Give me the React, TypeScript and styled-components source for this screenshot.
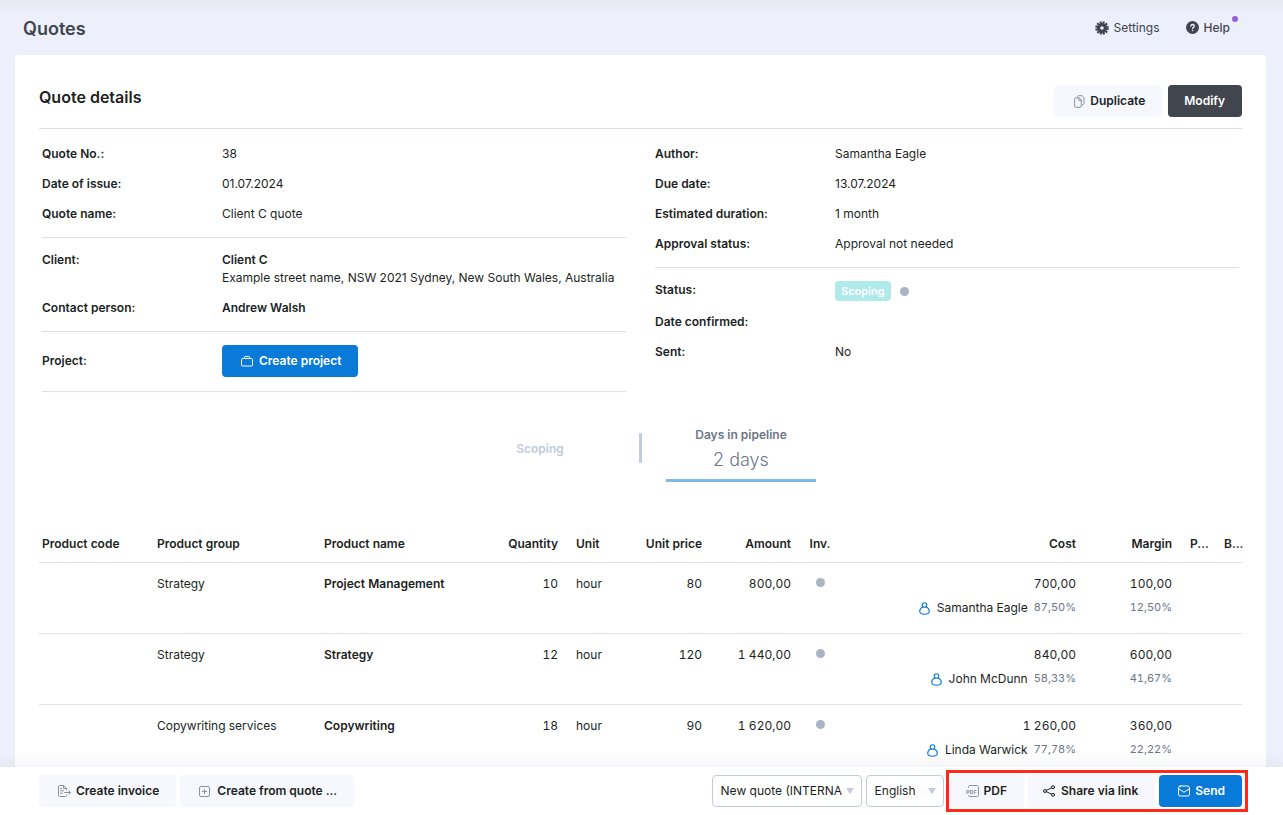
import React from 'react';
import styled, { createGlobalStyle, css } from 'styled-components';

const color = {
  page: '#edf0fa',
  text: '#1c1f24',
  heading: '#40454f',
  muted: '#6b7686',
  faint: '#c3cadb',
  line: '#dcdfea',
  dot: '#a9b4c4',
  soft: '#f6f8fd',
  dark: '#41454e',
  blue: '#0a7ad8',
  red: '#ff291a',
  icon: '#8793a5',
};

const GlobalStyle = createGlobalStyle`
  *, *::before, *::after { box-sizing: border-box; }
  body {
    margin: 0;
    background: ${color.page};
    color: ${color.text};
    font-family: Inter, 'Liberation Sans', sans-serif;
    font-size: 12px;
    line-height: 18px;
  }
`;

const Shell = styled.div`
  display: flex;
  flex-direction: column;
  height: 100vh;
`;

const Scroller = styled.div`
  flex: 1;
  min-height: 0;
  overflow-y: auto;
  scrollbar-width: none;
  background: linear-gradient(#e5e8f0, ${color.page} 14px);
`;

const TopBar = styled.header`
  display: flex;
  align-items: center;
  justify-content: space-between;
  height: 55px;
  padding: 0 53px 0 23px;
`;

const PageTitle = styled.h1`
  margin: 0;
  padding-top: 2px;
  font-size: 18px;
  line-height: 24px;
  font-weight: 600;
  color: ${color.heading};
`;

const TopNav = styled.nav`
  display: flex;
  gap: 26px;
`;

const TopLink = styled.a<{ $strong?: boolean }>`
  position: relative;
  display: flex;
  align-items: center;
  gap: 5px;
  color: ${color.heading};
  text-decoration: none;
  font-weight: ${(p) => (p.$strong ? 500 : 400)};
`;

const NewsDot = styled.span`
  position: absolute;
  top: -3px;
  right: -8px;
  width: 6px;
  height: 6px;
  border-radius: 50%;
  background: #9460d8;
`;

const Panel = styled.main`
  margin: 0 17px 0 15px;
  padding: 30px 24px;
  border-radius: 4px;
  background: #fff;
`;

const PanelHead = styled.div`
  display: flex;
  justify-content: space-between;
  padding-bottom: 11px;
  border-bottom: 1px solid #d8deea;
`;

const PanelTitle = styled.h2`
  margin: 0;
  font-size: 16px;
  line-height: 24px;
  font-weight: 600;
`;

const Actions = styled.div<{ $gap: number }>`
  display: flex;
  gap: ${(p) => p.$gap}px;
`;

type Tone = 'soft' | 'dark' | 'blue';
const tones = {
  soft: css`background: ${color.soft}; color: ${color.text};`,
  dark: css`background: ${color.dark}; color: #fff;`,
  blue: css`background: ${color.blue}; color: #fff;`,
};

const Button = styled.button<{ $tone?: Tone; $lead?: number }>`
  display: inline-flex;
  align-items: center;
  gap: 5px;
  height: 32px;
  padding: 0 17px 0 ${(p) => p.$lead ?? 18}px;
  border: 0;
  border-radius: 4px;
  font: 600 12px/18px Inter, 'Liberation Sans', sans-serif;
  white-space: nowrap;
  cursor: pointer;
  ${(p) => tones[p.$tone ?? 'soft']}
`;

const Details = styled.div`
  display: grid;
  grid-template-columns: 1fr 1fr;
  gap: 29px;
  padding: 3px 3px 0;
`;

const Section = styled.dl<{ $last?: boolean }>`
  margin: 0;
  padding: 7px 0 8px;
  border-bottom: ${(p) => (p.$last ? '0' : `1px solid ${color.line}`)};
`;

const Field = styled.div<{ $center?: boolean }>`
  display: flex;
  align-items: ${(p) => (p.$center ? 'center' : 'flex-start')};
  padding: 6px 0;
`;

const Label = styled.dt`
  flex: 0 0 180px;
  font-weight: 600;
`;

const Value = styled.dd<{ $strong?: boolean }>`
  margin: 0;
  font-weight: ${(p) => (p.$strong ? 600 : 400)};
`;

const StatusValue = styled(Value)`
  display: flex;
  align-items: center;
  gap: 9px;
`;

const ClientName = styled.strong`
  display: block;
  font-weight: 600;
`;

const Badge = styled.span`
  height: 20px;
  padding: 0 6px;
  border-radius: 4px;
  background: #b0eaea;
  color: #fff;
  font-size: 11px;
  line-height: 20px;
  font-weight: 600;
`;

const Dot = styled.span`
  display: inline-block;
  width: 9px;
  height: 9px;
  border-radius: 50%;
  background: ${color.dot};
  vertical-align: 1px;
`;

const Pipeline = styled.div`
  display: flex;
  justify-content: center;
  align-items: center;
  gap: 24px;
  height: 68px;
  margin-top: 22px;
`;

const Stage = styled.div<{ $active?: boolean }>`
  width: 150px;
  padding: ${(p) => (p.$active ? '12px 0 3px' : '2px 0 0')};
  border-bottom: ${(p) => (p.$active ? '3px solid #7fb9ea' : '0')};
  color: ${(p) => (p.$active ? color.muted : color.faint)};
  font-weight: 600;
  text-align: center;
`;

const StageValue = styled.div`
  font-size: 18px;
  line-height: 32px;
  font-weight: 300;
`;

const Separator = styled.span`
  width: 3px;
  height: 30px;
  border-radius: 1px;
  background: ${color.faint};
`;

const Products = styled.table`
  width: 100%;
  margin-top: 44px;
  border-collapse: collapse;
  table-layout: fixed;
`;

const Col = styled.col<{ $w?: number }>`
  width: ${(p) => (p.$w ? `${p.$w}px` : 'auto')};
`;

type Align = 'left' | 'right' | 'center';

const Th = styled.th<{ $align?: Align; $tight?: boolean }>`
  padding: ${(p) => (p.$tight ? '9px 0 9px 3px' : '9px 15px 9px 3px')};
  border-bottom: 1px solid ${color.line};
  font-weight: 600;
  text-align: ${(p) => p.$align ?? 'left'};
  white-space: nowrap;
`;

const Td = styled.td<{ $align?: Align; $strong?: boolean }>`
  height: 71px;
  padding: 12px 15px 0 3px;
  border-bottom: 1px solid #dfe0e4;
  font-weight: ${(p) => (p.$strong ? 600 : 400)};
  font-variant-numeric: tabular-nums;
  text-align: ${(p) => p.$align ?? 'left'};
  vertical-align: top;
  white-space: nowrap;
`;

const SubLine = styled.div`
  display: flex;
  align-items: flex-start;
  justify-content: flex-end;
  gap: 6px;
  padding-top: 6px;
`;

const Person = styled.span`
  display: flex;
  align-items: center;
  gap: 7px;
`;

const Percent = styled.span`
  color: ${color.muted};
  font-size: 11px;
  line-height: 16px;
`;

const Footer = styled.footer`
  display: flex;
  justify-content: space-between;
  padding: 8px 41px 8px 39px;
  background: #fff;
  box-shadow: 0 -2px 14px rgba(30, 40, 80, 0.07);
  z-index: 1;
`;

const SelectBox = styled.span<{ $w: number }>`
  display: grid;
  align-items: center;
  width: ${(p) => p.$w}px;

  & > * { grid-area: 1 / 1; }
  & > svg { justify-self: end; margin-right: 8px; pointer-events: none; }
`;

const Select = styled.select`
  appearance: none;
  width: 100%;
  height: 32px;
  padding: 0 19px 0 8px;
  border: 1px solid ${color.faint};
  border-radius: 4px;
  background: #fff;
  color: ${color.text};
  font: 400 12px/18px Inter, 'Liberation Sans', sans-serif;
`;

const Highlighted = styled(Actions)`
  position: relative;

  &::after {
    content: '';
    position: absolute;
    inset: -5px -6px -5px -2px;
    border: 3px solid ${color.red};
    pointer-events: none;
  }
`;

const Icon = ({ w, h, box, children }: { w: number; h: number; box?: string; children: React.ReactNode }) => (
  <svg width={w} height={h} viewBox={box ?? `0 0 ${w} ${h}`} fill="none" stroke="currentColor" strokeLinecap="round" strokeLinejoin="round" aria-hidden="true">
    {children}
  </svg>
);

const GearIcon = () => (
  <Icon w={14} h={14}>
    <circle cx="7" cy="7" r="3.500" strokeWidth="3.400" />
    <circle cx="7" cy="7" r="5.800" strokeWidth="2" strokeLinecap="butt" strokeDasharray="1.9 1.137" />
  </Icon>
);

const HelpIcon = () => (
  <Icon w={13} h={13}>
    <circle cx="6.5" cy="6.5" r="6.5" fill="currentColor" stroke="none" />
    <path d="M4.8 5.1c.1-1 .8-1.6 1.8-1.6s1.7.6 1.7 1.4c0 1.2-1.7 1.300-1.700 2.500" stroke={color.page} strokeWidth="1.300" />
    <circle cx="6.6" cy="9.5" r=".8" fill={color.page} stroke="none" />
  </Icon>
);

const CopyIcon = () => (
  <Icon w={13} h={13} box="-2 0 13 13">
    <g stroke={color.icon}>
      <path d="M3.200 1.900C3.300 1.100 3.800.7 4.500.7h3.600L10 2.700v5.900c0 .8-.5 1.300-1.300 1.300h-.6" />
      <path d="M5 2.900H1.900C1.100 2.900.6 3.400.6 4.200V11c0 .8.500 1.300 1.300 1.300h4.100c.8 0 1.300-.5 1.300-1.300V5.200z" />
      <path d="M4.800 3.100v2.300h2.300" />
    </g>
  </Icon>
);

const CaseIcon = () => (
  <Icon w={14} h={12} box="-1 0 14 12">
    <rect x=".5" y="3.500" width="11" height="7.500" rx="1" />
    <path d="M3.500 3.300V2.200c0-.5.300-.8.800-.8h3.400c.5 0 .8.300.8.800v1.100" />
  </Icon>
);

const InvoiceIcon = () => (
  <Icon w={14} h={12} box="-1 0 14 12">
    <g stroke={color.icon}>
      <path d="M8.500 10v.5c0 .6-.4 1-1 1h-6c-.6 0-1-.4-1-1v-9c0-.6.400-1 1-1h4.200l2.800 2.700v1.600M5.500.8v2.700h2.800M2.500 3.500h1M2.500 5.800h3M2.500 8.200h2M6.500 7.500h6M10.700 5.700l1.800 1.800-1.800 1.800" />
    </g>
  </Icon>
);

const PlusBoxIcon = () => (
  <Icon w={14} h={11} box="-1 0 14 11">
    <g stroke={color.icon}>
      <rect x=".5" y=".5" width="10" height="10" rx="1.500" />
      <path d="M5.500 3.300v4.400M3.300 5.500h4.400" />
    </g>
  </Icon>
);

const PdfIcon = () => (
  <Icon w={13} h={12}>
    <path stroke={color.icon} d="M2.500 2.500v-1c0-.6.400-1 1-1h7.700l1.300 1.300v8.700c0 .6-.4 1-1 1h-8c-.6 0-1-.4-1-1" />
    <text x="0" y="8.500" fill={color.icon} stroke="none" fontSize="6" fontWeight="700" fontFamily="'Liberation Mono', monospace">PDF</text>
  </Icon>
);

const ShareIcon = () => (
  <Icon w={13} h={12}>
    <circle cx="2" cy="6" r="1.500" />
    <circle cx="10" cy="2.200" r="1.500" />
    <circle cx="10" cy="9.800" r="1.500" />
    <path d="M3.400 5.300l5.200-2.500M3.400 6.700l5.200 2.500" />
  </Icon>
);

const MailIcon = () => (
  <Icon w={13} h={12} box="-1 0 13 12">
    <rect x=".5" y="1" width="11" height="10" rx="1.800" />
    <path d="M1 4l5 3.200L11 4" />
  </Icon>
);

const PersonIcon = () => (
  <Icon w={11} h={13}>
    <g stroke={color.blue} strokeWidth="1.100">
      <circle cx="5.500" cy="3" r="2.300" />
      <path d="M3.900 4.700C1.900 5.700.7 7.500.7 9.300c0 2 1.600 2.900 4.800 2.900s4.800-.9 4.800-2.900c0-1.800-1.200-3.600-3.200-4.600" />
    </g>
  </Icon>
);

const Caret = () => (
  <Icon w={8} h={6}>
    <path d="M0 0h8L4 6z" fill={color.faint} stroke="none" />
  </Icon>
);

const products = [
  { group: 'Strategy', name: 'Project Management', qty: '10', price: '80', amount: '800,00', cost: '700,00', person: 'Samantha Eagle', costPct: '87,50%', margin: '100,00', marginPct: '12,50%' },
  { group: 'Strategy', name: 'Strategy', qty: '12', price: '120', amount: '1 440,00', cost: '840,00', person: 'John McDunn', costPct: '58,33%', margin: '600,00', marginPct: '41,67%' },
  { group: 'Copywriting services', name: 'Copywriting', qty: '18', price: '90', amount: '1 620,00', cost: '1 260,00', person: 'Linda Warwick', costPct: '77,78%', margin: '360,00', marginPct: '22,22%' },
];

const TextField = ({ label, value, strong }: { label: string; value?: string; strong?: boolean }) => (
  <Field>
    <Label>{label}</Label>
    <Value $strong={strong}>{value}</Value>
  </Field>
);

export default function App() {
  return (
    <Shell>
      <GlobalStyle />
      <Scroller>
        <TopBar>
          <PageTitle>Quotes</PageTitle>
          <TopNav>
            <TopLink href="#settings"><GearIcon />Settings</TopLink>
            <TopLink href="#help" $strong><HelpIcon />Help<NewsDot /></TopLink>
          </TopNav>
        </TopBar>
        <Panel>
          <PanelHead>
            <PanelTitle>Quote details</PanelTitle>
            <Actions $gap={6}>
              <Button type="button"><CopyIcon />Duplicate</Button>
              <Button type="button" $tone="dark" $lead={16}>Modify</Button>
            </Actions>
          </PanelHead>

          <Details>
            <div>
              <Section>
                <TextField label="Quote No.:" value="38" />
                <TextField label="Date of issue:" value="01.07.2024" />
                <TextField label="Quote name:" value="Client C quote" />
              </Section>
              <Section>
                <Field>
                  <Label>Client:</Label>
                  <Value>
                    <ClientName>Client C</ClientName>
                    Example street name, NSW 2021 Sydney, New South Wales, Australia
                  </Value>
                </Field>
                <TextField label="Contact person:" value="Andrew Walsh" strong />
              </Section>
              <Section>
                <Field $center>
                  <Label>Project:</Label>
                  <Value><Button type="button" $tone="blue"><CaseIcon />Create project</Button></Value>
                </Field>
              </Section>
            </div>
            <div>
              <Section>
                <TextField label="Author:" value="Samantha Eagle" />
                <TextField label="Due date:" value="13.07.2024" />
                <TextField label="Estimated duration:" value="1 month" />
                <TextField label="Approval status:" value="Approval not needed" />
              </Section>
              <Section $last>
                <Field>
                  <Label>Status:</Label>
                  <StatusValue><Badge>Scoping</Badge><Dot /></StatusValue>
                </Field>
                <TextField label="Date confirmed:" />
                <TextField label="Sent:" value="No" />
              </Section>
            </div>
          </Details>

          <Pipeline>
            <Stage>Scoping</Stage>
            <Separator />
            <Stage $active>
              Days in pipeline
              <StageValue>2 days</StageValue>
            </Stage>
          </Pipeline>

          <Products>
            <colgroup>
              <Col $w={115} /><Col $w={167} /><Col $w={169} /><Col $w={83} /><Col $w={60} /><Col $w={84} />
              <Col $w={89} /><Col $w={40} /><Col /><Col $w={96} /><Col $w={34} /><Col $w={21} />
            </colgroup>
            <thead>
              <tr>
                <Th>Product code</Th>
                <Th>Product group</Th>
                <Th>Product name</Th>
                <Th $align="right">Quantity</Th>
                <Th>Unit</Th>
                <Th $align="right">Unit price</Th>
                <Th $align="right">Amount</Th>
                <Th $align="center">Inv.</Th>
                <Th $align="right">Cost</Th>
                <Th $align="right">Margin</Th>
                <Th $tight>P...</Th>
                <Th $tight>B...</Th>
              </tr>
            </thead>
            <tbody>
              {products.map((p) => (
                <tr key={p.name}>
                  <Td />
                  <Td>{p.group}</Td>
                  <Td $strong>{p.name}</Td>
                  <Td $align="right">{p.qty}</Td>
                  <Td>hour</Td>
                  <Td $align="right">{p.price}</Td>
                  <Td $align="right">{p.amount}</Td>
                  <Td $align="center"><Dot /></Td>
                  <Td $align="right">
                    {p.cost}
                    <SubLine><Person><PersonIcon />{p.person}</Person><Percent>{p.costPct}</Percent></SubLine>
                  </Td>
                  <Td $align="right">
                    {p.margin}
                    <SubLine><Percent>{p.marginPct}</Percent></SubLine>
                  </Td>
                  <Td />
                  <Td />
                </tr>
              ))}
            </tbody>
          </Products>
        </Panel>
      </Scroller>

      <Footer>
        <Actions $gap={4}>
          <Button type="button"><InvoiceIcon />Create invoice</Button>
          <Button type="button"><PlusBoxIcon />Create from quote ...</Button>
        </Actions>
        <Actions $gap={4}>
          <SelectBox $w={150}>
            <Select aria-label="Template" defaultValue="new">
              <option value="new">New quote (INTERNAL)</option>
            </Select>
            <Caret />
          </SelectBox>
          <SelectBox $w={78}>
            <Select aria-label="Language" defaultValue="en">
              <option value="en">English</option>
            </Select>
            <Caret />
          </SelectBox>
          <Highlighted $gap={4}>
            <Button type="button"><PdfIcon />PDF</Button>
            <Button type="button" $lead={15}><ShareIcon />Share via link</Button>
            <Button type="button" $tone="blue"><MailIcon />Send</Button>
          </Highlighted>
        </Actions>
      </Footer>
    </Shell>
  );
}
